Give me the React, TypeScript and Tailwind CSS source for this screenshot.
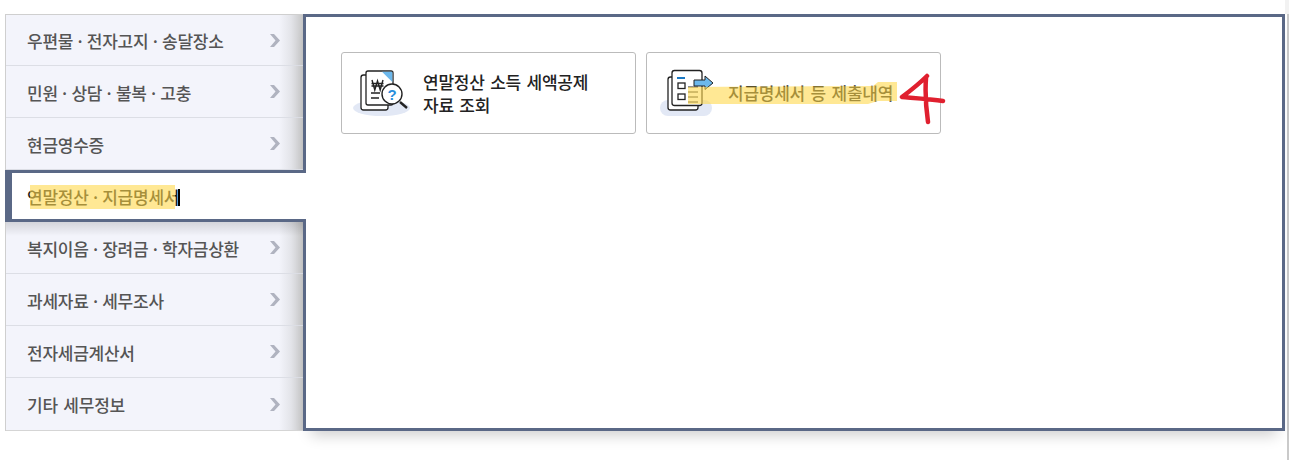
const menu = [
  { name: '우편물 · 전자고지 · 송달장소', spacing: '[word-spacing:-1.5px]' },
  { name: '민원 · 상담 · 불복 · 고충', spacing: '[word-spacing:-1.5px]' },
  { name: '현금영수증', spacing: '' },
  { name: '연말정산 · 지급명세서', spacing: '[word-spacing:-1.5px]', active: true },
  { name: '복지이음 · 장려금 · 학자금상환', spacing: '[word-spacing:-1.5px]', shaded: true },
  { name: '과세자료 · 세무조사', spacing: '[word-spacing:-1.5px]' },
  { name: '전자세금계산서', spacing: '' },
  { name: '기타 세무정보', spacing: '[word-spacing:2px]', last: true },
];

const rowBg = 'bg-[linear-gradient(to_right,#f3f4fb_calc(100%-24px),#e3e4e9_calc(100%-12px),#c6c6c6)]';
const shadedBg =
  'bg-[linear-gradient(to_bottom,rgba(0,0,0,0.13),transparent_14px),linear-gradient(to_right,#f3f4fb_calc(100%-24px),#e3e4e9_calc(100%-12px),#c6c6c6)]';

function Chevron() {
  return (
    <svg width="10" height="13" viewBox="0 0 10 13" className="mr-[23px] shrink-0">
      <path d="M0 0 H4 L10 6.5 L4 13 H0 L5.5 6.5 Z" fill="#b0b3c0" />
    </svg>
  );
}

function TaxIcon() {
  return (
    <svg width="58" height="54" viewBox="0 0 58 54" className="shrink-0">
      <ellipse cx="28.5" cy="42" rx="28.5" ry="8" fill="#e2e8f5" />
      <rect x="8" y="9" width="27" height="35" rx="2.5" fill="#fff" stroke="#222" strokeWidth="1.3" />
      <path d="M13 7 a2 2 0 0 1 2 -2 H38 a2 2 0 0 1 2 2 V37 a2 2 0 0 1 -2 2 H15 a2 2 0 0 1 -2 -2 Z" fill="#fff" stroke="#222" strokeWidth="1.3" />
      <path d="M29 5.7 H39.3 V16 Z" fill="#6cb8ec" />
      <path d="M19 14 L21.8 24 L24.5 15 L27.2 24 L30 14 M18.5 17.5 H30.5 M18.5 20 H30.5" fill="none" stroke="#222" strokeWidth="1.4" />
      <path d="M18 27 H27 M18 32 H26" stroke="#222" strokeWidth="1.3" />
      <path d="M47 36 L54 42" stroke="#222" strokeWidth="2.4" />
      <circle cx="39" cy="28" r="10" fill="#fff" stroke="#222" strokeWidth="1.4" />
      <text x="39" y="33.5" textAnchor="middle" fontSize="15" fontWeight="700" fill="#2a8fdc" fontFamily="'Liberation Sans', sans-serif">?</text>
    </svg>
  );
}

function ReportIcon() {
  return (
    <svg width="54" height="54" viewBox="0 0 54 54" className="shrink-0">
      <rect x="0" y="34" width="52" height="16" rx="8" fill="#e2e8f5" />
      <rect x="8" y="11" width="30" height="33" rx="2.5" fill="#fff" stroke="#222" strokeWidth="1.3" />
      <rect x="12" y="4.5" width="30" height="35" rx="2.5" fill="#fff" stroke="#222" strokeWidth="1.3" />
      <path d="M17 12 H25" stroke="#1a78c2" strokeWidth="2" />
      <rect x="18" y="17" width="7" height="5.5" fill="#fff" stroke="#222" strokeWidth="1.3" />
      <rect x="18" y="28" width="7" height="5.5" fill="#fff" stroke="#222" strokeWidth="1.3" />
      <path d="M28 21 H38 M28 26 H38 M28 31 H38 M28 36 H38" stroke="#222" strokeWidth="1" />
      <path d="M34 14 H45 V10 L53 17 L45 23.5 V20 H34 Z" fill="#6cb8ec" stroke="#222" strokeWidth="1" />
    </svg>
  );
}

export default function App() {
  return (
    <div className="flex h-[460px] w-[1289px] overflow-hidden bg-white font-['Noto_Sans_CJK_KR',sans-serif]">
      <div className="flex flex-1 items-start pl-[5px] pt-[14px]">
        <ul className="w-[298px] shrink-0 border-l border-[#cfcfcf]">
          {menu.map((item, i) =>
            item.active ? (
              <li
                key={item.name}
                className="relative z-20 -ml-px -mr-[3px] flex h-[52px] items-center border-y-[3px] border-l-[7px] border-[#5a6886] bg-white pl-[15px] text-[17px] font-medium tracking-[-0.25px] text-[#222]"
              >
                <span className={`relative mt-[2px] ${item.spacing}`}>
                  {item.name}
                  <span className="absolute inset-y-[1px] left-[3px] right-[4px] bg-[#ffd84d]/60" />
                </span>
                <span className="-ml-[1px] mt-[2px] h-[17px] w-[2px] bg-black" />
              </li>
            ) : (
              <li
                key={item.name}
                className={`flex items-center justify-between border-b pl-[21px] text-[17px] font-medium tracking-[-0.25px] text-[#555] ${
                  item.last ? 'h-[53px] border-[#d5d5d5]' : 'h-[52px] border-[#dcdee5]'
                } ${i === 0 ? 'border-t border-t-[#cfcfcf]' : ''} ${item.shaded ? shadedBg : rowBg}`}
              >
                <span className={`mt-[2px] ${item.spacing}`}>{item.name}</span>
                <Chevron />
              </li>
            ),
          )}
        </ul>

        <main className="relative z-10 h-[417px] flex-1 border-[3px] border-[#5a6886] bg-white p-[35px] shadow-[0_12px_14px_-8px_rgba(0,0,0,0.2)]">
          <div className="flex gap-[10px]">
            <a className="flex h-[82px] w-[295px] items-center gap-[12px] rounded-[3px] border border-[#bbb] pl-[11px] text-[17px] font-medium leading-[23px] tracking-[-0.25px] text-[#222] [word-spacing:2px]">
              <TaxIcon />
              <span className="w-[185px] break-keep">연말정산 소득 세액공제 자료 조회</span>
            </a>
            <a className="relative flex h-[82px] w-[295px] items-center rounded-[3px] border border-[#bbb] pl-[13px] text-[17px] font-medium tracking-[-0.25px] text-[#222] [word-spacing:2px]">
              <ReportIcon />
              <span className="ml-[14px]">지급명세서 등 제출내역</span>
              <svg width="210" height="26" viewBox="0 0 210 26" className="absolute left-[41px] top-[27px]">
                <path d="M0 7 L185 6 L190 2 L209 2 L209 21 L190 21 L180 24 L0 24 Z" fill="#ffd84d" fillOpacity="0.6" />
              </svg>
              <svg width="50" height="56" viewBox="0 0 50 56" className="absolute left-[252px] top-[17px]">
                <path
                  d="M28 6 C20 14 11 21 3 27 C15 28 32 29 44 31 M27 8 C26 22 27 38 29 52"
                  fill="none"
                  stroke="#e0202f"
                  strokeWidth="4.5"
                  strokeLinecap="round"
                  strokeLinejoin="round"
                />
              </svg>
            </a>
          </div>
        </main>
      </div>
      <aside className="w-[4px] shrink-0">
        <div className="h-[14px] bg-[#f2f2f2]" />
        <div className="ml-[2px] h-[446px] bg-[#cacaca]" />
      </aside>
    </div>
  );
}
